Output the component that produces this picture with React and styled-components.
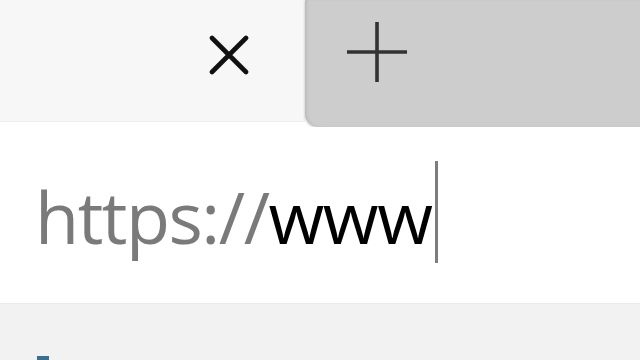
import React from "react";
import styled, {createGlobalStyle} from "styled-components";

const GlobalStyle = createGlobalStyle`
  html, body {
    margin: 0;
    padding: 0;
    width: 640px;
    height: 360px;
    overflow: hidden;
    background: #ffffff;
  }
`;

const App = () => {
    return (
        <Page>
            <GlobalStyle/>
            <TabStrip>
                <ActiveTab>
                    <CloseButton aria-label="Close tab">
                        <svg width="40" height="40" viewBox="0 0 40 40">
                            <path d="M3 3 L37 37 M37 3 L3 37" stroke="#111111" strokeWidth="4.6" strokeLinecap="round"/>
                        </svg>
                    </CloseButton>
                </ActiveTab>
                <NewTab>
                    <AddButton aria-label="New tab">
                        <svg width="62" height="62" viewBox="0 0 62 62">
                            <path d="M31 1 L31 61 M1 31 L61 31" stroke="#333333" strokeWidth="3.6"/>
                        </svg>
                    </AddButton>
                </NewTab>
            </TabStrip>

            <AddressBar>
                <Url>
                    <Scheme>https://</Scheme>www
                </Url>
                <Caret/>
            </AddressBar>

            <Content>
                <Peek/>
            </Content>
        </Page>
    );
};
export default App;


const Page = styled.div`
  display: flex;
  flex-direction: column;
  width: 640px;
  height: 360px;
  font-family: "Open Sans", "Noto Sans", sans-serif;
`;

const TabStrip = styled.div`
  display: flex;
  height: 127px;
  background-color: #ffffff;
`;

const ActiveTab = styled.div`
  width: 305px;
  height: 122px;
  background-color: #f7f7f7;
  display: flex;
  align-items: flex-start;
  justify-content: flex-end;
  padding: 35px 56px 0 0;
  box-sizing: border-box;
  border-bottom: 1px solid #eeeeee;
`;

const CloseButton = styled.div`
  width: 40px;
  height: 40px;
  display: flex;
`;

const NewTab = styled.div`
  flex: 1;
  background-color: #cdcdcd;
  border-bottom-left-radius: 13px;
  box-shadow: inset 3px 0 4px -2px rgba(0, 0, 0, 0.12), -1px 1px 2px rgba(0, 0, 0, 0.12);
  display: flex;
  align-items: flex-start;
  padding: 21px 0 0 41px;
`;

const AddButton = styled.div`
  width: 62px;
  height: 62px;
  display: flex;
`;

const AddressBar = styled.div`
  height: 176px;
  display: flex;
  align-items: center;
  padding-left: 35px;
  background-color: #ffffff;
`;

const Url = styled.div`
  font-size: 72px;
  letter-spacing: -1.5px;
  color: #000000;
  line-height: 1;
  margin-top: 2px;
`;

const Scheme = styled.span`
  color: #7a7a7a;
`;

const Caret = styled.div`
  width: 3px;
  height: 102px;
  background-color: #7d7d7d;
  margin-left: 4px;
  margin-bottom: 7px;
`;

const Content = styled.div`
  flex: 1;
  background-color: #f2f2f2;
  border-top: 1px solid #ebebeb;
  position: relative;
`;

const Peek = styled.div`
  position: absolute;
  left: 37px;
  bottom: 0;
  width: 12px;
  height: 4px;
  background-color: #3c6e8f;
`;
